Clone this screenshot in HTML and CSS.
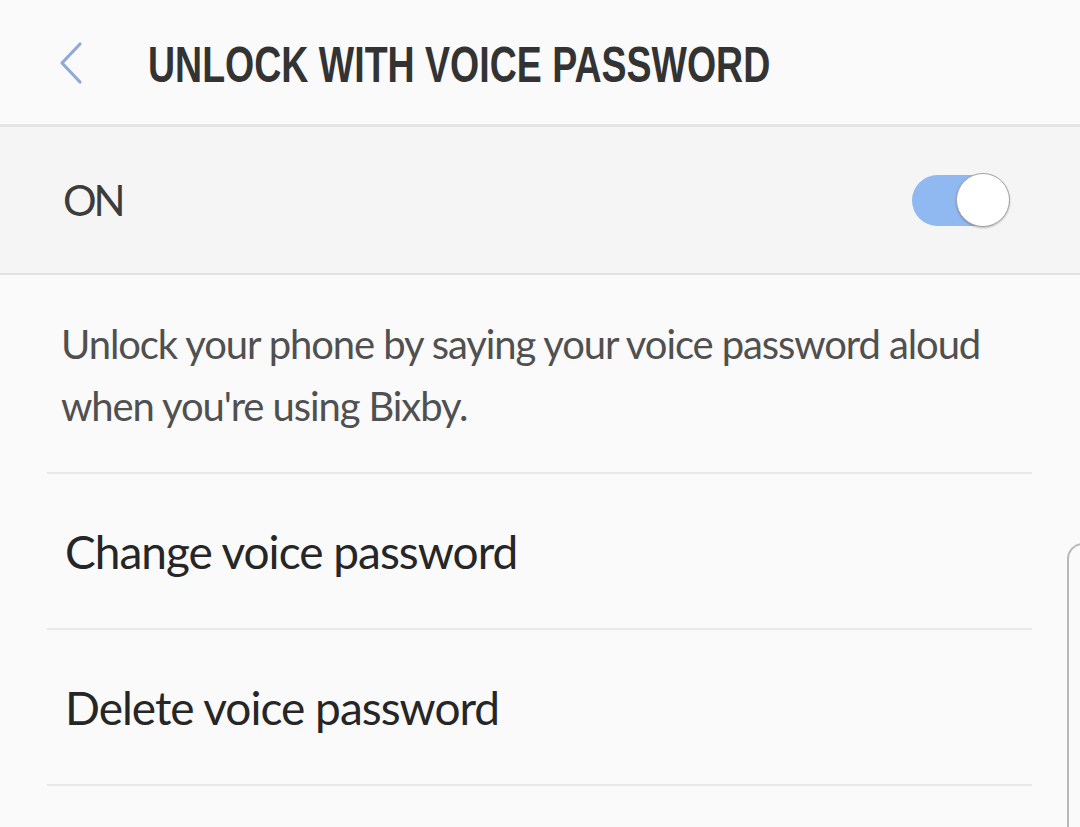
FILE: index.html
```html
<!DOCTYPE html>
<html lang="en">
<head>
<meta charset="utf-8">
<title>Unlock with voice password</title>
<link rel="stylesheet" href="styles.css">
</head>
<body>
<div class="screen">
  <header class="appbar">
    <button class="back" aria-label="Back">
      <svg width="30" height="44" viewBox="0 0 30 44"><path d="M23 3 L5 22 L23 41" fill="none" stroke="#8fa9d9" stroke-width="3.2" stroke-linecap="round" stroke-linejoin="round"/></svg>
    </button>
    <h1 class="title">UNLOCK WITH VOICE PASSWORD</h1>
  </header>
  <div class="master">
    <span class="master-label">ON</span>
    <span class="switch"><span class="track"></span><span class="knob"></span></span>
  </div>
  <p class="desc">Unlock your phone by saying your voice password aloud when you're using Bixby.</p>
  <ul class="list">
    <li class="item">Change voice password</li>
    <li class="item">Delete voice password</li>
  </ul>
  <div class="edge"></div>
</div>
</body>
</html>
```
FILE: styles.css
```css
html, body {
  margin: 0;
  padding: 0;
}
body {
  background: #fafafa;
  font-family: Lato, "Open Sans", sans-serif;
  color: #262626;
}
.screen {
  position: relative;
  width: 1080px;
  height: 827px;
  overflow: hidden;
  background: #fafafa;
}
.appbar {
  height: 123px;
  display: flex;
  align-items: center;
  border-bottom: 1px solid #ffffff;
}
.back {
  border: 0;
  background: none;
  padding: 0;
  margin: 2px 0 0 57px;
  width: 30px;
  height: 44px;
  display: flex;
  align-items: center;
}
.title {
  margin: 6px 0 0 61px;
  font-family: "Liberation Sans", Arial, sans-serif;
  font-weight: 700;
  font-size: 50px;
  color: #333333;
  line-height: 1;
  white-space: nowrap;
  transform: scaleX(0.75);
  transform-origin: left center;
}
.master {
  border-top: 3px solid #e4e4e4;
  border-bottom: 2px solid #e2e2e2;
  background: #f5f5f5;
  height: 146px;
  display: flex;
  align-items: center;
  justify-content: space-between;
  padding: 0 70px 0 63px;
}
.master-label {
  font-size: 42px;
  letter-spacing: -3px;
  color: #3c3c3c;
}
.switch {
  position: relative;
  width: 98px;
  height: 54px;
}
.track {
  position: absolute;
  left: 0;
  top: 2px;
  width: 92px;
  height: 51px;
  border-radius: 26px;
  background: #90b9f1;
}
.knob {
  position: absolute;
  right: 0;
  top: 0;
  width: 52px;
  height: 52px;
  border-radius: 50%;
  background: #ffffff;
  border: 1px solid #a5a5a5;
  box-shadow: 0 1px 2px rgba(0,0,0,0.25);
}
.desc {
  margin: 0 48px 0 47px;
  padding: 38px 0 35px 14px;
  font-size: 40px;
  letter-spacing: -1.1px;
  line-height: 62px;
  color: #505050;
  border-bottom: 2px solid #e8e8e8;
}
.list {
  list-style: none;
  margin: 0 48px 0 47px;
  padding: 0;
}
.item {
  height: 154px;
  display: flex;
  align-items: center;
  padding-left: 18px;
  font-size: 46px;
  letter-spacing: -1px;
  color: #262626;
  border-bottom: 2px solid #e8e8e8;
}
.edge {
  position: absolute;
  left: 1067px;
  top: 543px;
  width: 40px;
  height: 320px;
  border-left: 2px solid #b8b8b8;
  border-top: 2px solid #b8b8b8;
  border-top-left-radius: 16px;
}
```
